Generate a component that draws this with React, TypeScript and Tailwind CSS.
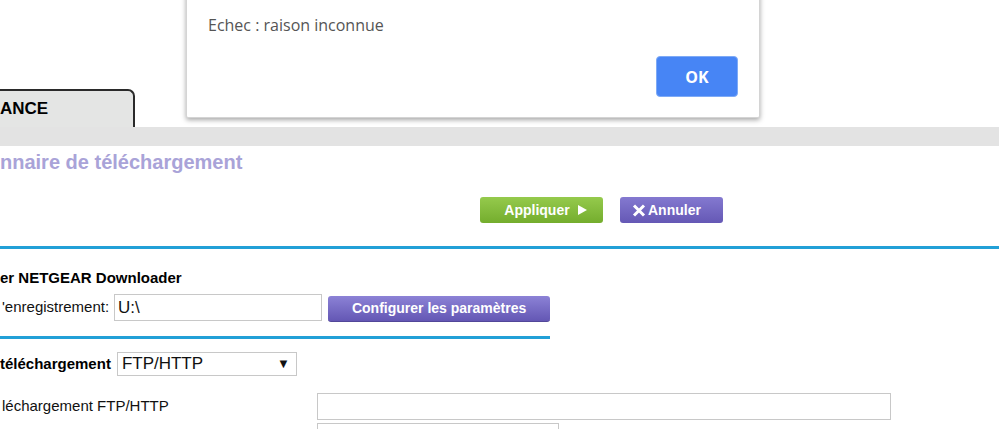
import React from "react";

export default function App() {
  return (
    <div className="relative w-full h-[429px] overflow-hidden bg-white font-['Liberation_Sans',Arial,sans-serif] text-black">
      {/* spacer above tab */}
      <div className="h-[89px]" />
      {/* tab row */}
      <div className="flex h-[38px]">
        <div className="w-[135px] h-[38px] bg-[#e4e5e4] border-t-2 border-r-2 border-[#2a2a2a] rounded-tr-[7px] flex items-center overflow-hidden">
          <span className="text-[17px] leading-[22px] font-bold whitespace-nowrap">ANCE</span>
        </div>
      </div>
      {/* gray bar */}
      <div className="h-[19px] bg-[#e3e3e3]" />
      {/* title */}
      <div className="pt-[5px] text-[20px] leading-[23px] font-bold text-[#a9a3d8] whitespace-nowrap">
        nnaire de téléchargement
      </div>
      {/* action buttons */}
      <div className="flex gap-[17px] pl-[480px] mt-[23px]">
        <button className="w-[123px] h-[26px] rounded-[3px] bg-gradient-to-b from-[#95ca4c] to-[#74ad2d] text-white text-[14px] font-bold flex items-center justify-center gap-[8px] pl-[8px]">
          <span>Appliquer</span>
          <svg width="9" height="10" viewBox="0 0 9 10">
            <polygon points="0,0 9,5 0,10" fill="white" />
          </svg>
        </button>
        <button className="w-[103px] h-[26px] rounded-[3px] bg-gradient-to-b from-[#8479d0] to-[#6558b5] text-white text-[14px] font-bold flex items-center pl-[12px] gap-[2px]">
          <svg width="14" height="13" viewBox="0 0 14 13">
            <path d="M2 1.5 L12 11.5 M12 1.5 L2 11.5" stroke="white" strokeWidth="3" strokeLinecap="butt" />
          </svg>
          <span>Annuler</span>
        </button>
      </div>
      {/* blue line */}
      <div className="mt-[23px] h-[3px] bg-[#22a0d7]" />
      {/* downloader section */}
      <div className="pt-[20px] text-[15px] leading-[17px] font-bold whitespace-nowrap">er NETGEAR Downloader</div>
      <div className="mt-[8px] flex items-start">
        <div className="h-[27px] flex items-center pl-[2px] text-[15px] whitespace-nowrap text-[#111]">'enregistrement:</div>
        <div className="ml-[5px] w-[208px] h-[27px] border border-[#c8c8c8] flex items-center pl-[3px] text-[17px] text-[#111]">U:\</div>
        <button className="ml-[6px] mt-[2px] w-[222px] h-[26px] rounded-[3px] bg-gradient-to-b from-[#8c82d6] to-[#6457b4] border-b border-[#524799] text-white text-[14px] font-bold flex items-center justify-center">
          Configurer les paramètres
        </button>
      </div>
      <div className="mt-[14px] w-[550px] h-[3px] bg-[#22a0d7]" />
      {/* type row */}
      <div className="mt-[13px] flex items-center h-[24px]">
        <span className="text-[15px] font-bold whitespace-nowrap">téléchargement</span>
        <div className="ml-[6px] w-[180px] h-[24px] border border-[#c8c8c8] flex items-center justify-between pl-[4px] pr-[6px] text-[17px] text-[#111]">
          <span>FTP/HTTP</span>
          <span className="text-[13px]">▼</span>
        </div>
      </div>
      {/* url row */}
      <div className="mt-[17px] flex items-center">
        <div className="w-[317px] pl-[2px] text-[15px] whitespace-nowrap text-[#111]">léchargement FTP/HTTP</div>
        <div className="w-[574px] h-[27px] border border-[#c8c8c8]" />
      </div>
      <div className="mt-[3px] pl-[317px]">
        <div className="w-[242px] h-[27px] border border-[#c8c8c8]" />
      </div>

      {/* alert dialog overlay */}
      <div className="absolute left-[186px] top-[-10px] w-[574px] h-[128px] bg-white border border-[#d4d4d4] rounded-[2px] shadow-[0_2px_5px_rgba(0,0,0,0.35)] flex flex-col justify-between pt-[23px] pb-[20px] px-[21px]">
        <div className="text-[16px] leading-[22px] text-[#555555] font-['Open_Sans','Noto_Sans',sans-serif]">Echec : raison inconnue</div>
        <div className="flex justify-end">
          <button className="w-[82px] h-[41px] rounded-[4px] bg-[#4785f5] border border-[#7eaaf6] text-white text-[16px] font-bold font-['Open_Sans','Noto_Sans',sans-serif]">
            OK
          </button>
        </div>
      </div>
    </div>
  );
}
